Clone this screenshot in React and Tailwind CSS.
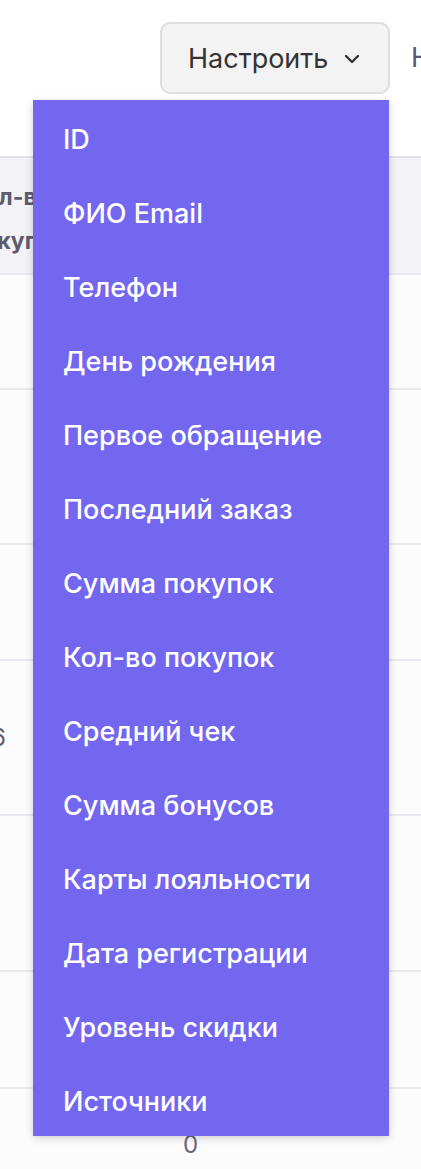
import React from 'react';

const columns = [
  'ID',
  'ФИО Email',
  'Телефон',
  'День рождения',
  'Первое обращение',
  'Последний заказ',
  'Сумма покупок',
  'Кол-во покупок',
  'Средний чек',
  'Сумма бонусов',
  'Карты лояльности',
  'Дата регистрации',
  'Уровень скидки',
  'Источники',
];

// row heights of the table behind the menu
const rows = [
  { h: 'h-[115px]', value: '' },
  { h: 'h-[155px]', value: '' },
  { h: 'h-[116px]', value: '' },
  { h: 'h-[155px]', value: '6' },
  { h: 'h-[156px]', value: '' },
  { h: 'h-[117px]', value: '' },
  { h: 'h-[120px]', value: '0' },
];

const font = { fontFamily: 'Inter, "Noto Sans", sans-serif' };

const Chevron = () => (
  <svg width="16" height="10" viewBox="0 0 16 10" fill="none">
    <path d="M2 2l6 6 6-6" stroke="#333" strokeWidth="2.4" strokeLinecap="round" strokeLinejoin="round" />
  </svg>
);

const App = () => {
  return (
    <div className="relative w-[421px] h-[1169px] overflow-hidden bg-[#fcfcfd]" style={font}>
      {/* Toolbar */}
      <div className="flex items-center h-[156px] pb-[40px] bg-white whitespace-nowrap">
        <button className="ml-[160px] shrink-0 flex items-center w-[230px] h-[72px] pl-[26px] pt-[2px] gap-[16px] bg-[#f3f3f3] border-2 border-[#dedede] rounded-[10px] text-[27px] text-[#333] font-normal">
          Настроить
          <Chevron />
        </button>
        <span className="ml-[21px] text-[27px] text-[#5b5670]">Найти</span>
      </div>

      {/* Table */}
      <div className="border-t-2 border-[#e1e1e8]">
        <div className="h-[115px] bg-[#f2f2f7] flex flex-col justify-center pt-[6px]">
          <div className="ml-[-31px] text-[23px] font-bold leading-[44px] text-[#5f5b6e] whitespace-nowrap">
            <div>Кол-во</div>
            <div>покупок</div>
          </div>
        </div>
        {rows.map((row, i) => (
          <div key={i} className={`${row.h} border-t-2 border-[#e8e8ee] flex`}>
            {row.value === '6' && (
              <span className="ml-[-9px] self-center text-[24px] text-[#5f5b6e]">6</span>
            )}
            {row.value === '0' && (
              <span className="ml-[183px] pt-[38px] text-[24px] text-[#6a6677]">0</span>
            )}
          </div>
        ))}
      </div>

      {/* Dropdown menu */}
      <div className="absolute left-[33px] top-[100px] w-[356px] bg-[#7367f0] shadow-[0_2px_8px_rgba(0,0,0,0.18)]">
        {columns.map((c) => (
          <div key={c} className="h-[74px] flex items-center pl-[30px] pt-[7px] text-[27px] font-medium text-white whitespace-nowrap">
            {c}
          </div>
        ))}
      </div>
    </div>
  );
};

export default App;
